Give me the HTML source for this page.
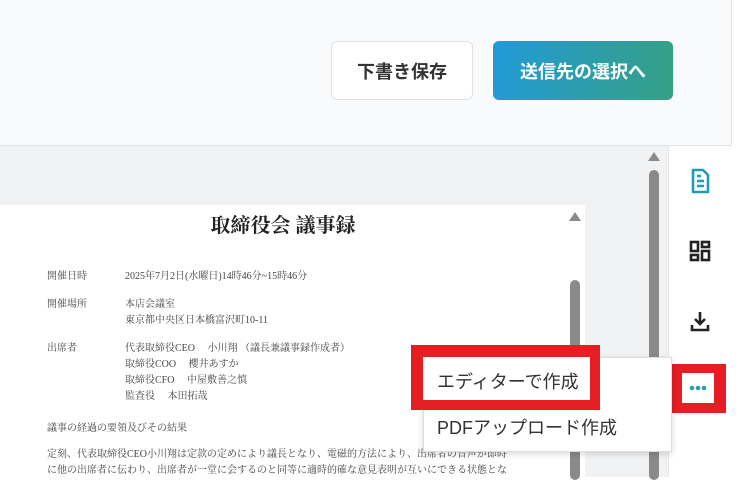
<!DOCTYPE html>
<html><head><meta charset="utf-8"><style>
body{margin:0;width:739px;height:477px;overflow:hidden;background:#fff;position:relative;font-family:"Liberation Sans","Noto Sans CJK JP",sans-serif}
.abs{position:absolute}
.top{left:0;top:0;width:731px;height:145px;background:#f9fafc;border-right:1px solid #e3e4e8;border-bottom:1px solid #e3e4e8}
.btn{top:41px;height:59px;border-radius:6px;font-size:18px;font-weight:bold;display:flex;align-items:center;justify-content:center;box-sizing:border-box}
.gray{left:0;top:146px;width:668px;height:331px;background:#f1f2f4}
.page{left:0;top:205px;width:585px;height:272px;background:#fff;font-family:"Liberation Serif","Noto Serif CJK SC",serif;color:#444;font-size:10px}
.page div{position:absolute;white-space:nowrap}
.side{left:668px;top:146px;width:71px;height:331px;background:#fff;border-left:1px solid #e6e6e6}
.tri{width:0;height:0;border-left:6px solid transparent;border-right:6px solid transparent;border-bottom:9px solid #8a8a8a}
</style></head><body>
<div class="abs top"></div>
<div class="abs btn" style="left:331px;width:142px;background:#fff;border:1px solid #dfe1e5;color:#333">下書き保存</div>
<div class="abs btn" style="left:493px;width:180px;background:linear-gradient(100deg,#219ad8,#36a083);color:#fff">送信先の選択へ</div>
<div class="abs gray"></div>
<div class="abs page">
<div style="left:0;width:566px;top:4px;text-align:center;font-size:20px;font-weight:bold;color:#222">取締役会 議事録</div>
<div style="left:47px;top:62px">開催日時</div><div style="left:125px;top:62px">2025年7月2日(水曜日)14時46分~15時46分</div>
<div style="left:47px;top:90px">開催場所</div><div style="left:125px;top:90px">本店会議室</div>
<div style="left:125px;top:106px">東京都中央区日本橋富沢町10-11</div>
<div style="left:47px;top:134px">出席者</div><div style="left:125px;top:134px">代表取締役CEO　 小川翔 （議長兼議事録作成者）</div>
<div style="left:125px;top:150px">取締役COO　 櫻井あすか</div>
<div style="left:125px;top:166px">取締役CFO　 中屋敷善之慎</div>
<div style="left:125px;top:182px">監査役　 本田拓哉</div>
<div style="left:47px;top:214px">議事の経過の要領及びその結果</div>
<div style="left:47px;top:240px">定刻、代表取締役CEO小川翔は定款の定めにより議長となり、電磁的方法により、出席者の音声が即時</div>
<div style="left:47px;top:256px">に他の出席者に伝わり、出席者が一堂に会するのと同等に適時的確な意見表明が互いにできる状態とな</div>
</div>
<div class="abs tri" style="left:569px;top:212px"></div>
<div class="abs" style="left:570px;top:280px;width:10px;height:200px;border-radius:5px;background:#8a8a8a"></div>
<div class="abs tri" style="left:648px;top:152px"></div>
<div class="abs" style="left:649px;top:170px;width:10px;height:310px;border-radius:5px;background:#8a8a8a"></div>
<div class="abs side"></div>
<svg class="abs" style="left:688px;top:168px" width="24" height="26" viewBox="0 0 24 26"><path d="M5 2h10l5 5v17H5z" fill="none" stroke="#1f9bb5" stroke-width="2.6" stroke-linejoin="round"/><path d="M9 13h7M9 18h7M9 8h4" stroke="#1f9bb5" stroke-width="2.4"/></svg>
<svg class="abs" style="left:688px;top:239px" width="24" height="24" viewBox="0 0 24 24" fill="none" stroke="#222" stroke-width="2.6"><rect x="3" y="3" width="7" height="9"/><rect x="14" y="3" width="7" height="5"/><rect x="3" y="16" width="7" height="5"/><rect x="14" y="12" width="7" height="9"/></svg>
<svg class="abs" style="left:688px;top:309px" width="24" height="24" viewBox="0 0 24 24" fill="none" stroke="#222" stroke-width="2.6"><path d="M12 3v12M7 10l5 5 5-5M4 16v5h16v-5"/></svg>
<div class="abs" style="left:672px;top:364px;width:54px;height:49px;background:#e51e23"></div>
<div class="abs" style="left:682px;top:373px;width:32px;height:30px;background:#fff"></div>
<svg class="abs" style="left:682px;top:373px" width="32" height="30"><circle cx="10" cy="15" r="2.3" fill="#2aa0a8"/><circle cx="16" cy="15" r="2.3" fill="#2aa0a8"/><circle cx="22" cy="15" r="2.3" fill="#2aa0a8"/></svg>
<div class="abs" style="left:423px;top:357px;width:247px;height:93px;background:#fff;border:1px solid #ddd;box-shadow:0 2px 6px rgba(0,0,0,.15)"></div>
<div class="abs" style="left:411px;top:345px;width:189px;height:65px;background:#e51e23"></div>
<div class="abs" style="left:423px;top:357px;width:167px;height:43px;background:#fff"></div>
<div class="abs" style="left:437px;top:368px;font-size:18px;color:#333">エディターで作成</div>
<div class="abs" style="left:437px;top:414px;font-size:18px;color:#333">PDFアップロード作成</div>
</body></html>
